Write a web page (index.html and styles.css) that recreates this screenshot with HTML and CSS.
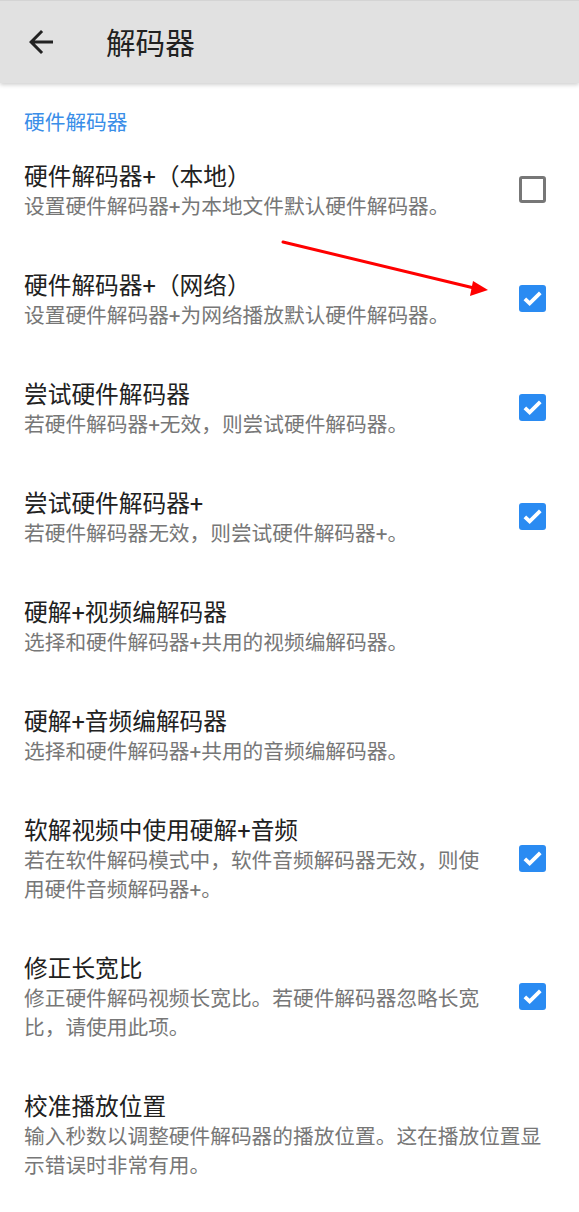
FILE: index.html
```html
<!DOCTYPE html>
<html lang="zh-CN">
<head>
    <meta charset="UTF-8">
    <meta name="viewport" content="width=device-width, initial-scale=1.0">
    <title>解码器</title>
    <link rel="stylesheet" href="styles.css">
</head>
<body>
    <div id="page">
        <div class="toolbar">
            <a href="javascript:void(0)" class="back">
                <svg viewBox="0 0 24 24" width="36" height="36"><path d="M20 11H7.83l5.59-5.59L12 4l-8 8 8 8 1.41-1.41L7.83 13H20v-2z" fill="#222"/></svg>
            </a>
            <h1 class="title">解码器</h1>
        </div>

        <div class="category">硬件解码器</div>

        <div class="pref">
            <div class="pref-text">
                <div class="pref-title">硬件解码器+（本地）</div>
                <div class="pref-summary">设置硬件解码器+为本地文件默认硬件解码器。</div>
            </div>
            <div class="pref-widget">
                <span class="check"></span>
            </div>
        </div>

        <div class="pref">
            <div class="pref-text">
                <div class="pref-title">硬件解码器+（网络）</div>
                <div class="pref-summary">设置硬件解码器+为网络播放默认硬件解码器。</div>
            </div>
            <div class="pref-widget">
                <span class="check on"></span>
            </div>
        </div>

        <div class="pref">
            <div class="pref-text">
                <div class="pref-title">尝试硬件解码器</div>
                <div class="pref-summary">若硬件解码器+无效，则尝试硬件解码器。</div>
            </div>
            <div class="pref-widget">
                <span class="check on"></span>
            </div>
        </div>

        <div class="pref">
            <div class="pref-text">
                <div class="pref-title">尝试硬件解码器+</div>
                <div class="pref-summary">若硬件解码器无效，则尝试硬件解码器+。</div>
            </div>
            <div class="pref-widget">
                <span class="check on"></span>
            </div>
        </div>

        <div class="pref">
            <div class="pref-text">
                <div class="pref-title">硬解+视频编解码器</div>
                <div class="pref-summary">选择和硬件解码器+共用的视频编解码器。</div>
            </div>
        </div>

        <div class="pref">
            <div class="pref-text">
                <div class="pref-title">硬解+音频编解码器</div>
                <div class="pref-summary">选择和硬件解码器+共用的音频编解码器。</div>
            </div>
        </div>

        <div class="pref">
            <div class="pref-text">
                <div class="pref-title">软解视频中使用硬解+音频</div>
                <div class="pref-summary">若在软件解码模式中，软件音频解码器无效，则使<br>用硬件音频解码器+。</div>
            </div>
            <div class="pref-widget">
                <span class="check on"></span>
            </div>
        </div>

        <div class="pref">
            <div class="pref-text">
                <div class="pref-title">修正长宽比</div>
                <div class="pref-summary">修正硬件解码视频长宽比。若硬件解码器忽略长宽比，请使用此项。</div>
            </div>
            <div class="pref-widget">
                <span class="check on"></span>
            </div>
        </div>

        <div class="pref">
            <div class="pref-text">
                <div class="pref-title">校准播放位置</div>
                <div class="pref-summary">输入秒数以调整硬件解码器的播放位置。这在播放位置显示错误时非常有用。</div>
            </div>
        </div>

        <!-- annotation arrow -->
        <svg class="mark" width="214" height="64" viewBox="0 0 214 64">
            <line x1="3" y1="7" x2="194" y2="53" stroke="#f00" stroke-width="3" stroke-linecap="round"/>
            <polygon points="208,55 193,46 190,61" fill="#f00"/>
        </svg>
    </div>
</body>
</html>
```

FILE: styles.css
```css
* {
    margin: 0;
    padding: 0;
    box-sizing: border-box;
    text-decoration: none;
}

body {
    background-color: #fff;
    font-family: Roboto, "Noto Sans CJK SC", sans-serif;
}

#page {
    position: relative;
    width: 579px;
    min-height: 1212px;
    background-color: #fff;
}

.toolbar {
    display: flex;
    align-items: center;
    height: 83px;
    border-top: 1px solid #d4d4d4;
    background-color: #e1e1e1;
    box-shadow: 0 2px 4px rgba(0, 0, 0, .18);
}

.back {
    display: flex;
    margin-left: 23px;
    width: 36px;
    height: 36px;
}

.title {
    margin-left: 47px;
    margin-top: 3px;
    font-size: 29.6px;
    font-weight: 400;
    line-height: 36px;
    color: #212121;
}

.category {
    padding: 26px 24px 0;
    font-size: 20.7px;
    line-height: 28px;
    color: #3a8ee8;
}

.pref {
    display: flex;
    align-items: center;
    padding: 24px;
}

.pref-text {
    flex: 1;
    min-width: 0;
}

.pref-title {
    font-size: 23.7px;
    line-height: 32px;
    color: #212121;
}

.pref-summary {
    font-size: 20.7px;
    line-height: 29px;
    color: #777;
}

.pref-widget {
    display: flex;
    justify-content: flex-end;
    flex: none;
    width: 69px;
    padding-right: 9px;
    margin-top: -4px;
}

.check {
    display: block;
    width: 27px;
    height: 27px;
    border: 3px solid #777;
    border-radius: 3px;
}

.check.on {
    border: none;
    background-color: #2a8bf2;
    background-image: url("data:image/svg+xml,%3Csvg xmlns='http://www.w3.org/2000/svg' viewBox='0 0 18 18'%3E%3Cpolyline points='3.9,9.2 7.1,12.3 14.2,5.2' fill='none' stroke='%23fff' stroke-width='2.5'/%3E%3C/svg%3E");
    background-size: 100% 100%;
}

.mark {
    position: absolute;
    left: 280px;
    top: 235px;
}
```
